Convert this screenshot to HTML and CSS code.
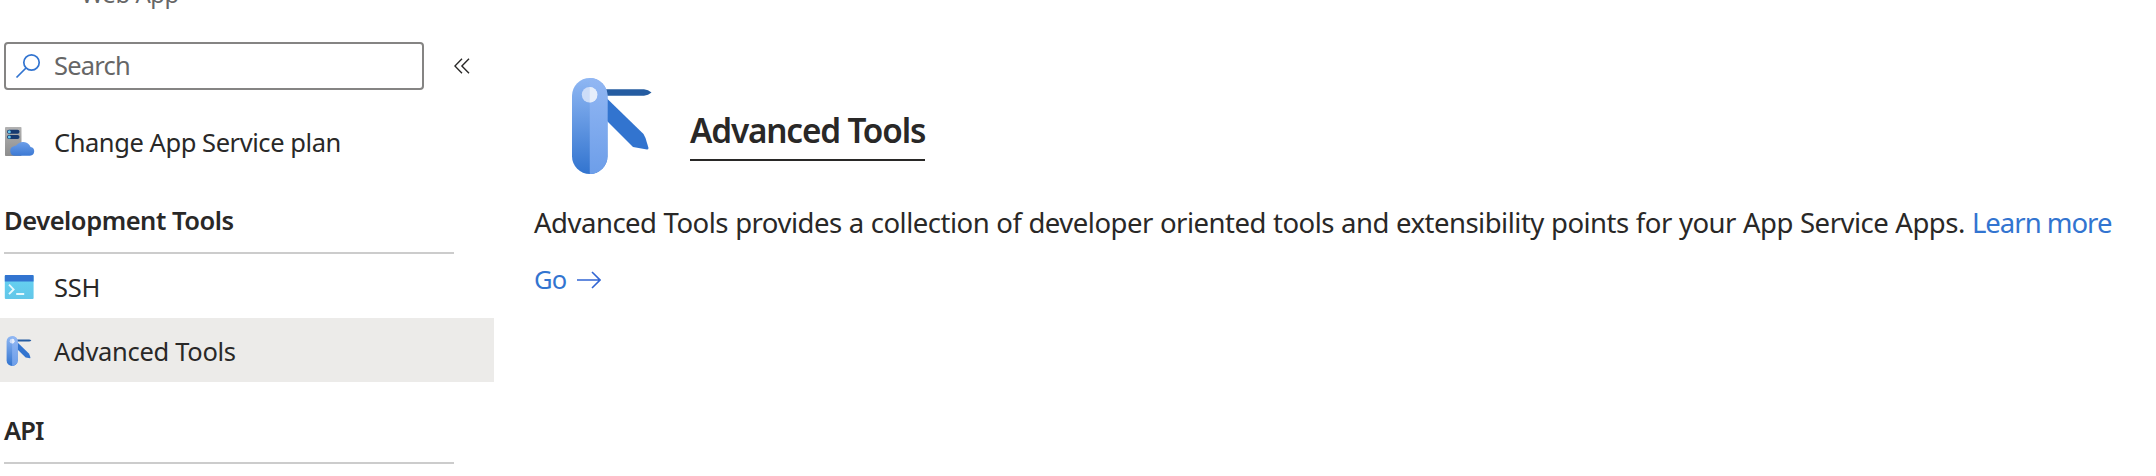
FILE: index.html
```
<!DOCTYPE html>
<html lang="en"><head><meta charset="utf-8"><title>Advanced Tools</title><link rel="stylesheet" href="styles.css"></head>
<body>
<div class="page">
<aside class="sidebar">
  <div class="subtitle"><span class="t-sub">Web App</span></div>
  <div class="search-row">
    <div class="search">
      <svg class="search-icon" viewBox="0 0 26 26" fill="none" stroke="#3274d0" stroke-width="1.7"><circle cx="16.5" cy="9.5" r="7.7"/><path d="M11 15 1.500 24.500"/></svg>
      <span class="t-search">Search</span>
    </div>
    <svg class="collapse" viewBox="0 0 16 16" fill="none" stroke="#292827" stroke-width="1.4"><path d="M8 .8.9 8 8 15.200M15 .8 7.900 8 15 15.200"/></svg>
  </div>
  <nav>
    <a class="item">
      <svg class="icon" viewBox="0 0 32 32"><defs><linearGradient id="cloud" x2="0" y2="1"><stop stop-color="#6c9ee8"/><stop offset="1" stop-color="#3c79d4"/></linearGradient><linearGradient id="server" x2="0" y2="1"><stop stop-color="#b2b2b2"/><stop offset="1" stop-color="#8d8d8d"/></linearGradient></defs><rect x="2" y="1" width="16.500" height="29" rx=".8" fill="url(#server)"/><g fill="#173a70"><rect x="4" y="3.800" width="12.500" height="4" rx="2"/><rect x="4" y="9" width="12.500" height="4" rx="2"/></g><g fill="#65c8ee"><circle cx="6.300" cy="5.800" r="1.500"/><circle cx="6.300" cy="11" r="1.500"/></g><path d="M11.800 29.800a4.900 4.900 0 0 1-1-9.600q1-.5 2.400-.6a8.300 8.300 0 0 1 14.400 1.300 4.500 4.500 0 0 1-.6 8.900z" fill="url(#cloud)"/></svg>
      <span class="t-change">Change App Service plan</span>
    </a>
    <h2 class="group first"><span class="t-dev">Development Tools</span></h2>
    <a class="item">
      <svg class="icon" viewBox="0 0 32 32"><defs><linearGradient id="term" x2="0" y2="1"><stop stop-color="#66d2f3"/><stop offset="1" stop-color="#62c6e8"/></linearGradient></defs><rect x="1.800" y="4" width="28.800" height="24" rx="1" fill="url(#term)"/><path d="M2.800 4h26.800a1 1 0 0 1 1 1v5.500H1.800V5a1 1 0 0 1 1-1z" fill="#3274d0"/><path d="M6 13.700l4.600 4.700L6 23.200M13.200 23h8" fill="none" stroke="#e6f8fd" stroke-width="1.900"/></svg>
      <span class="t-ssh">SSH</span>
    </a>
    <a class="item selected">
      <svg class="icon" viewBox="0 0 32 32"><use href="#knife" transform="translate(3.600 1) scale(.312)"/></svg>
      <span class="t-adv">Advanced Tools</span>
    </a>
    <h2 class="group"><span class="t-api">API</span></h2>
  </nav>
</aside>
<main class="main">
  <header class="hero">
    <svg class="hero-icon" viewBox="0 0 80 96"><defs><linearGradient id="handle" x2="0" y2="1"><stop stop-color="#8fb7f3"/><stop offset="1" stop-color="#3274cf"/></linearGradient><linearGradient id="side" x2="0" y2="1"><stop stop-color="#92b7f3"/><stop offset="1" stop-color="#6d9ee9"/></linearGradient></defs>
    <g id="knife"><path d="M34 11.300h38l4 1 3.500 2.200-3.500 2.200-4 1H34z" fill="#255ca1"/><path d="M35 20.500 71.500 56l2 4 3 10q0 1.500-1.500 1.500L61 69 35 43z" fill="#3274cf"/><rect x="0" y="0" width="35.500" height="96" rx="17.750" fill="url(#handle)"/><path d="M17.750 0a17.750 17.750 0 0 1 17.750 17.750v60.500A17.750 17.750 0 0 1 17.750 96z" fill="url(#side)"/><circle cx="17.500" cy="16.700" r="7.700" fill="#cdddf8"/><path d="M17.750 9a7.700 7.700 0 0 1 0 15.400z" fill="#e6eefb"/></g></svg>
    <h1 class="title"><span class="t-title">Advanced Tools</span></h1>
  </header>
  <p class="desc"><span class="t-desc">Advanced Tools provides a collection of developer oriented tools and extensibility points for your App Service Apps. </span><a class="t-learn">Learn more</a></p>
  <a class="go"><span class="t-go">Go</span><svg class="arrow" viewBox="0 0 24 18" fill="none" stroke="#3266d3" stroke-width="1.600"><path d="M0 9h23M15 1l8 8-8 8"/></svg></a>
</main>
</div>
</body></html>
```
FILE: styles.css
```
body{margin:0;background:#fff;color:#292827;font-family:"Noto Sans","Open Sans",sans-serif;font-size:25.5px}
.page{display:flex;height:476px;overflow:hidden}
.sidebar{width:494px;flex:none}
.subtitle{display:flex;height:42px;padding-left:81px;color:#666;font-size:24px;line-height:36px}
.subtitle span{margin-top:-24px}
.t-sub{letter-spacing:-.5px}
.t-search{letter-spacing:-.8px;padding-bottom:2px}
.t-change{letter-spacing:-.44px}
.t-dev{letter-spacing:-.46px}
.t-ssh{letter-spacing:-.2px}
.t-adv{letter-spacing:-.3px}
.t-api{letter-spacing:-.9px}
.t-title{letter-spacing:-1.16px}
.t-desc{letter-spacing:-.5px;word-spacing:.46px}
.t-learn{letter-spacing:-1px}
.search-row{display:flex;align-items:center;height:48px;padding-left:4px}
.search{box-sizing:border-box;width:420px;height:48px;border:2px solid #858483;border-radius:4px;display:flex;align-items:center;padding-left:9px;color:#666}
.search-icon{width:26px;height:26px;margin-right:13px}
.collapse{width:16px;height:16px;margin-left:30px}
nav{padding-top:19px}
.item{display:flex;align-items:center;height:64px;padding-left:3px}
.item span{line-height:62px;padding-top:2px}
.icon{width:32px;height:32px;margin:2px 19px 0 0;flex:none}
.selected{background:#ecebe9}
.group{box-sizing:border-box;height:82px;width:450px;margin:0 0 0 4px;border-bottom:2px solid #ccc;font-size:25.5px;font-weight:600;line-height:36px;padding-top:30px}
.first{height:81px;padding-top:29px}
.main{flex:1;padding:78px 0 0 40px}
.hero{display:flex;height:96px;padding-left:38px}
.hero-icon{width:80px;height:96px;margin-right:38px}
.title{margin:28px 0 0;width:235px;white-space:nowrap;height:55px;box-sizing:border-box;border-bottom:2px solid #292827;font-size:33.300px;font-weight:600;line-height:48px}
.desc{margin:29px 0 0;font-size:27.500px;line-height:40px;white-space:nowrap}
.desc a,.go{color:#3274d0}
.go{display:flex;align-items:center;height:40px;margin-top:17px}
.t-go{width:33px;letter-spacing:-.7px;padding-bottom:2px}
.arrow{width:24px;height:18px;margin-left:10px}
```
